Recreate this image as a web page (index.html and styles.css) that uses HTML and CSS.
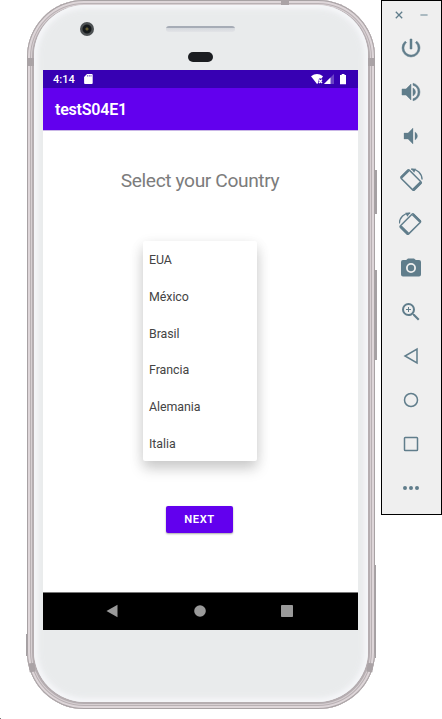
FILE: index.html
```
<!DOCTYPE html>
<html lang="en">
<head>
<meta charset="utf-8">
<title>testS04E1</title>
<link rel="stylesheet" href="styles.css">
</head>
<body>
<main class="desktop">
  <div class="phone">
    <i class="key key-power"></i><i class="key key-volume"></i><i class="key key-lower"></i><i class="key key-left"></i>
    <i class="seam seam-tl"></i><i class="seam seam-tr"></i><i class="seam seam-bl"></i><i class="seam seam-br"></i><i class="seam seam-top"></i>
    <div class="face">
      <div class="forehead">
        <i class="camera"></i><i class="speaker"></i><i class="sensor"></i>
      </div>
      <div class="screen">
        <div class="status">
          <span>4:14</span>
          <svg class="sd" width="9" height="10" viewBox="0 0 9 10"><path fill="#fff" d="M3 0h4.8q.9 0 .9.9v8.2q0 .9-.9.9H1q-.9 0-.9-.9V3z"/><path stroke="#3700b3" stroke-width=".6" d="M3.6 1v1.6M5.3 1v1.6M7 1v1.6"/></svg>
          <svg class="signals" width="36" height="11" viewBox="0 0 36 11"><path fill="#fff" d="M0 2.2Q6-2 12 2.2L10.6 4.6H8L7 9.2 6 10z"/><path stroke="#fff" stroke-width="1.4" d="m8 5.6 3 3.4m0-3.4L8 9"/><path fill="#6a42c6" d="M23 0v10H13z"/><path fill="#fff" d="M19.5 3.5V10H13z"/><path fill="#fff" d="M29.4.9h1.3V0h2.8v.9H35v9.4h-6V.9z"/></svg>
        </div>
        <div class="appbar">testS04E1</div>
        <div class="content">
          <h1>Select your Country</h1>
          <ul class="dropdown"><li>EUA</li><li>México</li><li>Brasil</li><li>Francia</li><li>Alemania</li><li>Italia</li></ul>
          <button class="next">NEXT</button>
        </div>
        <div class="nav">
          <svg width="12" height="14" viewBox="0 0 12 14"><path fill="#9a9a9a" d="M11.5.7v12.6L.5 7z"/></svg>
          <svg width="12" height="12" viewBox="0 0 12 12"><circle cx="6" cy="6" r="5.8" fill="#9a9a9a"/></svg>
          <svg width="12" height="12" viewBox="0 0 12 12"><rect width="12" height="12" rx=".8" fill="#9a9a9a"/></svg>
        </div>
      </div>
    </div>
  </div>
  <aside class="tools">
    <div class="window-row">
      <svg width="8" height="8" viewBox="0 0 8 8"><path d="m.8.8 6.4 6.4m0-6.4L.8 7.2" stroke="#607d8b" stroke-width="1.3"/></svg>
      <svg width="8" height="8" viewBox="0 0 8 8"><path d="M.4 4h7.2" stroke="#a3b4bc" stroke-width="1.8"/></svg>
    </div>
    <svg class="tool" viewBox="0 0 24 24"><path stroke="#607d8b" stroke-width=".5" d="M13 3h-2v10h2V3zm4.83 2.17-1.42 1.42A6.92 6.92 0 0 1 19 12a7 7 0 1 1-11.42-5.42L6.17 5.17A8.93 8.93 0 0 0 3 12a9 9 0 0 0 18 0c0-2.74-1.23-5.18-3.17-6.83z"/></svg>
    <svg class="tool" viewBox="0 0 24 24"><path stroke="#607d8b" stroke-width=".5" d="M3 9v6h4l5 5V4L7 9H3zm13.5 3A4.5 4.5 0 0 0 14 7.97v8.05A4.5 4.5 0 0 0 16.5 12zM14 3.23v2.06a7 7 0 0 1 0 13.42v2.06a9 9 0 0 0 0-17.54z"/></svg>
    <svg class="tool" viewBox="0 0 24 24"><path stroke="#607d8b" stroke-width=".3" d="M18.5 12A4.5 4.5 0 0 0 16 7.97v8.05A4.5 4.5 0 0 0 18.5 12zM5 9v6h4l5 5V4L9 9H5z"/></svg>
    <svg class="tool" viewBox="0 0 24 24"><g class="outline"><rect x="6.2" y="2.8" width="11.6" height="18.6" rx="1.2" transform="rotate(-45 12 12)"/><path class="thick" d="m2.2 9.7 7.4-7.4M14.3 21.7l7.4-7.4"/><path class="arc" d="M12.2 1.4C18.4.8 22.8 5.4 23.1 11.5"/></g><path d="m12 .6 5.1.1-2 4z"/></svg>
    <svg class="tool" viewBox="0 0 24 24"><g transform="matrix(-1 0 0 1 23.4 0)"><g class="outline"><rect x="6.2" y="2.8" width="11.6" height="18.6" rx="1.2" transform="rotate(-45 12 12)"/><path class="thick" d="m2.2 9.7 7.4-7.4M14.3 21.7l7.4-7.4"/><path class="arc" d="M12.2 1.4C18.4.8 22.8 5.4 23.1 11.5"/></g><path d="m12 .6 5.1.1-2 4z"/></g></svg>
    <svg class="tool" viewBox="0 0 24 24"><circle cx="12" cy="12" r="3.2"/><path d="M9 2.5 7.17 4H4a2 2 0 0 0-2 2v12.5a2 2 0 0 0 2 2h16a2 2 0 0 0 2-2V6a2 2 0 0 0-2-2h-3.17L15 2.5H9zm3 14.5a5 5 0 1 1 0-10 5 5 0 0 1 0 10z"/></svg>
    <svg class="tool" viewBox="0 0 24 24"><path d="M15.5 14h-.79l-.28-.27A6.47 6.47 0 0 0 16 9.5 6.5 6.5 0 1 0 9.5 16c1.61 0 3.09-.59 4.23-1.57l.27.28v.79l5 4.99L20.49 19l-4.99-5zm-6 0a4.5 4.5 0 1 1 0-9 4.5 4.5 0 0 1 0 9zm2.5-4h-2v2H9v-2H7V9h2V7h1v2h2v1z"/></svg>
    <svg class="tool" viewBox="0 0 24 24"><path class="line" d="M18 5v14L6 12z"/></svg>
    <svg class="tool" viewBox="0 0 24 24"><circle class="line" cx="12" cy="12" r="6.5"/></svg>
    <svg class="tool" viewBox="0 0 24 24"><rect class="line" x="5.5" y="5.5" width="13" height="13" rx=".8"/></svg>
    <svg class="tool" viewBox="0 0 24 24"><path d="M6 10a2 2 0 1 0 0 4 2 2 0 0 0 0-4zm12 0a2 2 0 1 0 0 4 2 2 0 0 0 0-4zm-6 0a2 2 0 1 0 0 4 2 2 0 0 0 0-4z"/></svg>
  </aside>
  <i class="speck"></i>
</main>
</body>
</html>
```
FILE: styles.css
```
* { box-sizing: border-box; }
body { margin: 0; background: #fff; font-family: Roboto, sans-serif; }
.desktop { position: relative; display: flex; align-items: flex-start; width: 442px; height: 719px; padding-left: 27px; overflow: hidden; }
.phone {
  position: relative; flex: none; width: 348px; height: 709px; margin-right: 6px; padding: 5px 7px 7px; border-radius: 57px;
  background: #b5adb0;
  box-shadow: inset 0 0 0 1px #a8a2a4, inset 0 0 0 3px #ded6d9, inset 0 0 0 4px #b9b1b4, inset 0 0 0 5px #d8d0d3, inset 0 0 0 6px #b5aeb1;
}
.face {
  height: 697px; padding: 0 9px; border-radius: 51px;
  background: #e9ebec;
  box-shadow: inset 0 0 4px 3px #f5f6f8, inset 0 0 9px 3px #f0f1f4;
}
.forehead { position: relative; height: 65px; }
.camera { position: absolute; left: 37px; top: 17px; width: 14px; height: 14px; border-radius: 50%; background: radial-gradient(circle, #655d32 0 1px, #15191b 2px 4px, #4d5153 5px 7px); }
.speaker { position: absolute; left: 123px; top: 21px; width: 69px; height: 6px; border-radius: 3px; background: linear-gradient(#a6acb6 0 2px, #d5d8dd 2px, #e3e4e7); }
.sensor { position: absolute; left: 145px; top: 47px; width: 25px; height: 10px; border-radius: 5px; background: #1b1d21; }
.screen { width: 315px; height: 560px; background: #fff; }
.status { display: flex; align-items: center; height: 18px; padding: 0 8px 0 10px; background: #3700b3; color: #fff; font-size: 11px; font-weight: 500; }
.status span { width: 31px; }
.signals { margin-left: auto; margin-right: 3px; }
.appbar { height: 42px; padding-left: 12px; background: #6200ee; color: #fff; font-size: 16px; font-weight: 600; line-height: 44px; letter-spacing: -.2px; }
.content { display: flex; flex-direction: column; align-items: center; height: 462px; padding: 38px 1px 0 0; border-top: 1px solid #c9b6e6; }
h1 { margin: 0; height: 24px; font-size: 19.2px; font-weight: 400; line-height: 24px; letter-spacing: -.39px; color: #7c7c7c; white-space: nowrap; }
.dropdown { width: 114px; height: 220px; margin: 48px 0 0; padding: 0 0 0 6px; list-style: none; border-radius: 2px; background: #fff; box-shadow: 0 8px 14px rgba(0,0,0,.17), 0 3px 14px rgba(0,0,0,.08); }
.dropdown li { height: 36.75px; font-size: 12.4px; line-height: 37.5px; letter-spacing: -.05px; color: #444; }
.next { width: 67px; height: 27px; margin: 45px 1px 0 0; padding: 1px 0 0; border: 0; border-radius: 2px; background: #6200ee; color: #fff; font: 600 11.2px/26px Roboto, sans-serif; letter-spacing: .6px; box-shadow: 0 1px 2px rgba(0,0,0,.35); }
.nav { display: grid; grid-template-columns: 87.5px 87.5px 87.5px; justify-content: center; justify-items: center; align-items: center; height: 38px; padding: 0 2px 1px 0; border-top: 1px solid #777; background: #000; }
.key { position: absolute; width: 2px; background: #a5a0a3; }
.key-power { left: 348px; top: 170px; height: 44px; }
.key-volume { left: 348px; top: 270px; height: 90px; }
.key-lower { left: 348px; top: 565px; width: 1px; height: 93px; }
.key-left { left: -1px; top: 634px; width: 1px; height: 22px; }
.seam { position: absolute; width: 6px; height: 8px; background: #aaa3a6; }
.seam-tl { left: 1px; top: 58px; }
.seam-tr { left: 341px; top: 58px; }
.seam-bl { left: 2px; top: 663px; height: 9px; transform: rotate(-8deg); }
.seam-br { left: 340px; top: 663px; height: 9px; transform: rotate(8deg); }
.seam-top { left: 254px; top: 0; width: 8px; height: 5px; }
.tools { display: flex; flex: none; flex-direction: column; align-items: center; width: 61px; height: 515px; padding: 9px 1px 0 0; border: 1px solid #000; background: #efefef; }
.window-row { display: flex; flex: none; gap: 17px; height: 26px; padding-top: 1px; margin-left: 1px; }
.tool { flex: none; width: 24px; height: 24px; margin-bottom: 20px; fill: #607d8b; }
.tool .line, .outline { fill: none; stroke: #607d8b; stroke-width: 1.5; }
.outline .thick { stroke-width: 2.6; }
.outline .arc { stroke-width: 1.4; }
.speck { position: absolute; left: 0; top: 718px; width: 1px; height: 1px; background: #777; }
```
